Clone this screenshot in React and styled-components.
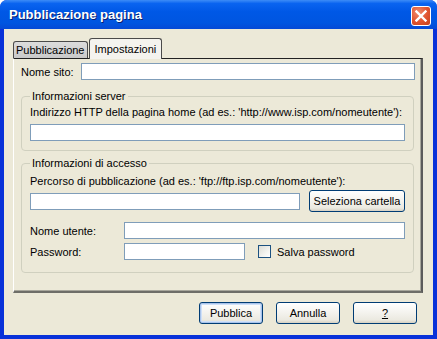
import styled, { createGlobalStyle, css } from 'styled-components'

const Global = createGlobalStyle`
  html, body { margin: 0; padding: 0; background: #fff; }
  body { font-family: 'Liberation Sans', Arial, sans-serif; font-size: 11px; color: #000; }
  * { box-sizing: border-box; }
`

// FINESTRA

const Finestra = styled.div`
  width: 437px;
  height: 339px;
  display: flex;
  flex-direction: column;
  background: #0831d9;
  border-radius: 7px 7px 0 0;
  overflow: hidden;
`

const BarraTitolo = styled.div`
  height: 29px;
  display: flex;
  align-items: center;
  justify-content: space-between;
  padding: 0 6px 0 9px;
  background: linear-gradient(#3d8cf7 0%, #0a64f0 12%, #0058e6 40%, #0055e0 80%, #0549d6 100%);
  color: #fff;
  font-weight: bold;
  font-size: 13px;
  text-shadow: 1px 1px 0 #0a1f6e;
`

const Chiudi = styled.div`
  width: 20px;
  height: 20px;
  margin-top: 3px;
  border: 1px solid #fff;
  border-radius: 3px;
  background: radial-gradient(circle at 35% 30%, #f08a6c 0%, #e0532f 55%, #c2401d 100%);
  display: flex;
  align-items: center;
  justify-content: center;
`

const Corpo = styled.div`
  flex: 1;
  margin: 0 4px 4px 4px;
  background: #ece9d8;
  padding: 9px 10px 0 9px;
  display: flex;
  flex-direction: column;
`

// SCHEDE

const Schede = styled.div`
  display: flex;
  align-items: flex-end;
  height: 20px;
  position: relative;
  z-index: 1;
`

const Scheda = styled.div`
  border: 1px solid #4a4a4a;
  border-bottom: none;
  border-radius: 3px 3px 0 0;
  display: flex;
  align-items: center;
  ${p => p.attiva ? css`
    height: 21px;
    margin-bottom: -1px;
    background: #f4f3ee;
    padding: 0 5px;
  ` : css`
    height: 17px;
    background: linear-gradient(#dcdcdc, #c9c9c9);
    margin-right: 1px;
    padding: 0 2px;
  `}
`

const Pannello = styled.div`
  height: 235px;
  border-top: 1px solid #222;
  border-left: 1px solid #fff;
  border-right: 2px solid #5a5a5a;
  border-bottom: 2px solid #6e6e68;
  box-shadow: inset -1px -1px 0 #a8a79c;
  padding: 4px 6px 0 7px;
  display: flex;
  flex-direction: column;
`

// CAMPI

const Riga = styled.div`
  display: flex;
  align-items: center;
  height: ${p => p.h || 17}px;
  margin-top: ${p => p.mt || 0}px;
`

const Etichetta = styled.span`
  width: ${p => p.w ? p.w + 'px' : 'auto'};
  flex: none;
  white-space: nowrap;
`

const Campo = styled.div`
  height: 17px;
  width: ${p => p.w ? p.w + 'px' : 'auto'};
  flex: ${p => p.w ? 'none' : 1};
  background: #fff;
  border: 1px solid #7f9db9;
`

const Gruppo = styled.fieldset`
  margin: ${p => p.mt}px 1px 0 0;
  padding: 0 8px ${p => p.pb}px 8px;
  border: 1px solid #d0d0bf;
  border-radius: 4px;
  height: ${p => p.h}px;
  legend {
    padding: 0 2px;
    margin-left: 0;
    line-height: 13px;
  }
`

const Testo = styled.div`
  line-height: 13px;
  margin-top: ${p => p.mt || 0}px;
  white-space: nowrap;
`

const Pulsante = styled.button`
  font: inherit;
  color: #000;
  width: ${p => p.w}px;
  height: ${p => p.h || 22}px;
  flex: none;
  border: 1px solid #003c74;
  border-radius: 3px;
  background: linear-gradient(#fff 0%, #f6f5f1 40%, #ebe9e0 85%, #d6d0c2 100%);
  padding: 0;
  ${p => p.predefinito && css`
    box-shadow: inset 0 0 0 1px #a9c3ea, inset 0 0 0 2px #cfe0f8;
  `}
  u { text-underline-offset: 1px; }
`

const Casella = styled.span`
  width: 13px;
  height: 13px;
  border: 1px solid #1c5180;
  background: linear-gradient(135deg, #dcdcd5 0%, #f3f3ef 60%, #fff 100%);
  margin: 0 6px 0 13px;
  flex: none;
`

const Pulsanti = styled.div`
  display: flex;
  justify-content: flex-end;
  gap: 13px;
  margin-top: 9px;
  padding-right: 6px;
`

const IconaChiudi = () => (
  <svg width="12" height="12" viewBox="0 0 12 12">
    <path d="M1.5 1.5 L10.5 10.5 M10.5 1.5 L1.5 10.5" stroke="#fff" strokeWidth="2.4" strokeLinecap="square" />
  </svg>
)

// COMPONENTE
const App = () => {
  return (
    <>
      <Global />
      <Finestra>
        <BarraTitolo>
          <span>Pubblicazione pagina</span>
          <Chiudi><IconaChiudi /></Chiudi>
        </BarraTitolo>
        <Corpo>
          <Schede>
            <Scheda>Pubblicazione</Scheda>
            <Scheda attiva>Impostazioni</Scheda>
          </Schede>
          <Pannello>
            <Riga>
              <Etichetta w={60}>Nome sito:</Etichetta>
              <Campo />
            </Riga>
            <Gruppo mt={10} h={61} pb={8}>
              <legend>Informazioni server</legend>
              <Testo mt={3}>Indirizzo HTTP della pagina home (ad es.: 'http://www.isp.com/nomeutente'):</Testo>
              <Campo style={{ marginTop: 5 }} />
            </Gruppo>
            <Gruppo mt={6} h={116} pb={8}>
              <legend>Informazioni di accesso</legend>
              <Testo mt={5}>Percorso di pubblicazione (ad es.: 'ftp://ftp.isp.com/nomeutente'):</Testo>
              <Riga h={22} mt={2}>
                <Campo w={270} />
                <Pulsante w={96} style={{ marginLeft: 9 }}>Seleziona cartella</Pulsante>
              </Riga>
              <Riga mt={10}>
                <Etichetta w={94}>Nome utente:</Etichetta>
                <Campo />
              </Riga>
              <Riga mt={4}>
                <Etichetta w={94}>Password:</Etichetta>
                <Campo w={121} />
                <Casella />
                <Etichetta>Salva password</Etichetta>
              </Riga>
            </Gruppo>
          </Pannello>
          <Pulsanti>
            <Pulsante w={64} predefinito>Pubblica</Pulsante>
            <Pulsante w={64}>Annulla</Pulsante>
            <Pulsante w={64}><u>?</u></Pulsante>
          </Pulsanti>
        </Corpo>
      </Finestra>
    </>
  )
}

export default App
